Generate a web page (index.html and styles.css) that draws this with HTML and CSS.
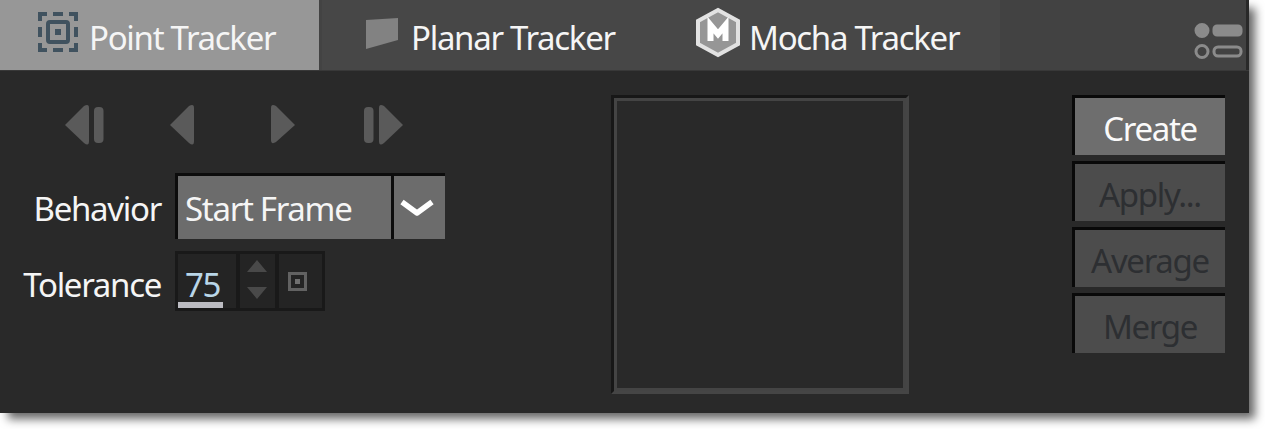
FILE: index.html
```
<!DOCTYPE html>
<html lang="en">
<head>
<meta charset="utf-8">
<title>Tracker</title>
<link rel="stylesheet" href="styles.css">
</head>
<body>
<main class="panel">
  <header class="tabs">
    <div class="tab tab-active">
      <svg class="icon-point" width="40" height="40" viewBox="0 0 40 40" fill="none" stroke="#40525f" stroke-width="4">
        <path d="M2 9V2H9M31 2H38V9M38 31V38H31M9 38H2V31M15 2H25M15 38H25M2 15V25M38 15V25"/>
        <rect x="10" y="10" width="20" height="20" rx="2"/>
        <rect x="17" y="17" width="6" height="6" fill="#40525f" stroke="none"/>
      </svg>
      <span class="label-point">Point Tracker</span>
    </div>
    <div class="tab tab-planar">
      <svg class="icon-planar" width="34" height="32" viewBox="0 0 34 32"><path d="M1 2L33 0V22L1 31Z" fill="#828282"/></svg>
      <span class="label-planar">Planar Tracker</span>
    </div>
    <div class="tab tab-mocha">
      <svg class="icon-mocha" width="44" height="49" viewBox="0 0 44 49"><path d="M22 2L42 13V36L22 47L2 36V13Z" fill="#969696" stroke="#e2e2e2" stroke-width="4"/><path d="M14.5 33V17L22 26L29.5 17V33" fill="none" stroke="#fff" stroke-width="6"/></svg>
      <span class="label-mocha">Mocha Tracker</span>
    </div>
    <div class="tab-rest">
      <svg width="50" height="38" viewBox="0 0 50 38" fill="#8b8b8b" stroke="#8b8b8b" stroke-width="3">
        <circle cx="8" cy="8.500" r="6"/><rect x="20" y="4" width="27" height="9" rx="3"/>
        <g fill="none"><circle cx="8" cy="29.500" r="6"/><rect x="20" y="25" width="27" height="9" rx="4"/></g>
      </svg>
    </div>
  </header>
  <div class="content">
    <section class="controls">
      <div class="transport">
        <svg width="340" height="42" viewBox="0 0 340 42" fill="#5a5a5a">
          <path d="M1 21L20 2Q25-1 25 4V37Q25 43 20 39Z"/><rect x="30" y="3" width="9.500" height="36" rx="4"/>
          <path d="M106 21L125 2Q130-1 130 4V37Q130 43 125 39Z"/>
          <path d="M231 21L212 2Q207-1 207 4V36Q207 41 212 38Z"/>
          <rect x="300" y="3" width="9.500" height="36" rx="4"/><path d="M339 21L320 2Q315-1 315 4V37Q315 43 320 39Z"/>
        </svg>
      </div>
      <div class="field behavior">
        <label><span class="label-behavior">Behavior</span></label>
        <div class="select"><div class="value"><span class="label-start">Start Frame</span></div>
          <div class="arrow"><svg width="34" height="18" viewBox="0 0 34 18"><path d="M2 3L17 14L32 3" fill="none" stroke="#fff" stroke-width="5.500" stroke-linejoin="round"/></svg></div>
        </div>
      </div>
      <div class="field tolerance">
        <label><span class="label-tolerance">Tolerance</span></label>
        <div class="number">
          <div class="digits"><span class="label-number">75</span></div>
          <div class="spinner"><svg width="20" height="40" viewBox="0 0 20 40" fill="#494949"><path d="M0 12L10 0L20 12ZM0 27H20L10 39Z"/></svg></div>
          <div class="key"><svg width="19" height="19" viewBox="0 0 19 19"><rect x="1.500" y="1.500" width="16" height="16" fill="none" stroke="#626262" stroke-width="3"/><rect x="7" y="7" width="5" height="5" fill="#707070"/></svg></div>
        </div>
      </div>
    </section>
    <div class="preview"><div class="preview-inner"></div></div>
    <section class="actions">
      <div class="button primary"><span class="label-create">Create</span></div>
      <div class="button"><span class="label-apply">Apply...</span></div>
      <div class="button"><span class="label-average">Average</span></div>
      <div class="button"><span class="label-merge">Merge</span></div>
    </section>
  </div>
</main>
</body>
</html>
```
FILE: styles.css
```
* { box-sizing: border-box; }
html, body { margin: 0; overflow: hidden; background: #fff; }
body { width: 1265px; height: 429px; font: 33px/40px "Noto Sans", sans-serif; color: #f5f5f5; letter-spacing: -1.3px; }
svg { display: block; flex: none; overflow: visible; }
span { display: block; white-space: nowrap; }
.panel { width: 1249px; height: 413px; background: #292929; box-shadow: 7px 7px 9px -1px rgba(0,0,0,.6); }
.tabs { display: flex; height: 71px; padding-right: 3px; border-bottom: 1px solid #383838; }
.tab { display: flex; align-items: flex-start; background: #474747; }
.tab-active { width: 319px; padding-left: 38px; background: #979797; }
.tab-planar { width: 343px; padding-left: 43px; border-left: 3px solid #434343; }
.tab-mocha { width: 338px; padding-left: 34px; }
.tab-rest { flex: 1; display: flex; justify-content: flex-end; background: #424242; padding: 22px 2px 0 0; }
.icon-point { margin-top: 12px; }
.icon-planar { margin-top: 18px; }
.icon-mocha { margin-top: 8px; }
.tab span { margin-top: 18px; }
.label-point { margin-left: 11px; }
.label-planar { margin-left: 12px; }
.label-mocha { margin-left: 9px; }
.content { display: grid; grid-template-columns: 611px 298px 153px; column-gap: 0; height: 342px; padding: 24px 0 0; }
.controls { padding-top: 9px; }
.transport { padding-left: 64px; height: 69px; }
.field { display: flex; }
.field label { width: 161px; display: flex; justify-content: flex-end; padding-top: 16px; margin-right: 14px; }
.select { display: flex; width: 270px; height: 66px; background: #0c0c0c; padding: 3px 0 0 3px; gap: 3px; }
.value { width: 213px; background: #6c6c6c; padding: 13px 0 0 7px; }
.arrow { width: 51px; background: #6c6c6c; padding: 23px 0 0 6px; }
.tolerance { margin-top: 12px; }
.tolerance label { padding-top: 14px; }
.number { display: flex; width: 150px; height: 60px; background: #191919; padding: 3px; gap: 4px; }
.digits { width: 58px; background: #242424; display: flex; flex-direction: column; justify-content: space-between; }
.digits span { width: 45px; height: 54px; border-bottom: 6px solid #bcbcc2; padding: 11px 0 0 7px; color: #b9d6e8; }
.spinner { width: 35px; background: #242424; padding: 6px 0 0 7px; }
.key { flex: 1; background: #242424; padding: 18px 0 0 9px; }
.preview { height: 299px; border: 3px solid #171717; border-right-color: #454545; border-bottom-color: #454545; }
.preview-inner { height: 100%; border: 3px solid #444; }
.actions { margin-left: 163px; width: 153px; display: flex; flex-direction: column; gap: 6px; }
.button { height: 60px; flex: none; background: #4c4c4c; border: solid #090909; border-width: 3px 0 0 3px; color: #2d2f32; display: flex; justify-content: center; padding-top: 11px; }
.primary { background: #6e6e6e; color: #fafafa; }
```
